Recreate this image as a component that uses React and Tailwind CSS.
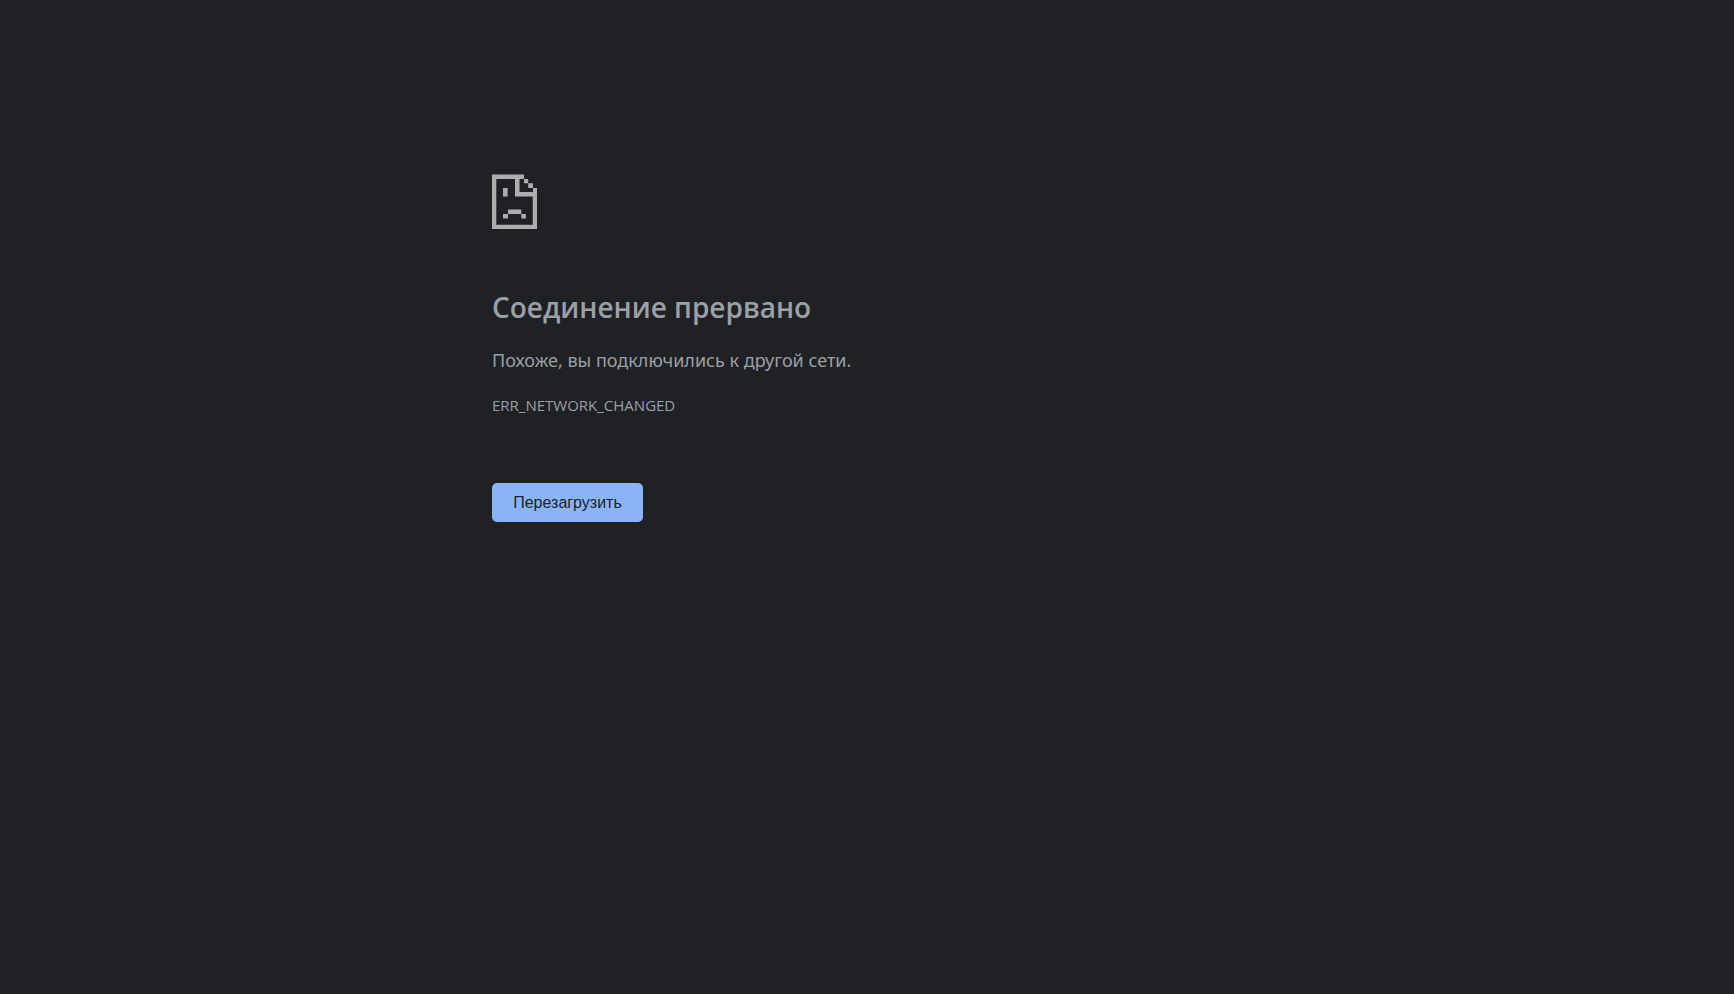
export default function App() {
  return (
    <div className="min-h-screen bg-[#202124] px-6 font-['Open_Sans','Noto_Sans',sans-serif] text-[#9aa0a6]">
      <main className="mx-auto max-w-[750px] pt-[174px]">
        <svg
          aria-hidden="true"
          className="block h-[55px] w-[45px] fill-[#adadad]"
          viewBox="0 0 45 55"
        >
          <path d="M0 .6H32V5H27.5V18H41V14H45V55H0ZM4.3 5V50.7H40.7V22.4H23V5Z" fillRule="evenodd" />
          <path d="M32 5h4.2v4.2h-4.2zM36.2 9.2h4.8v4.8h-4.8zM11 14h4.6v8.4h-4.6zM16 35.6h13.3v4.4h-13.3zM11 40h5v4.4h-5zM29.3 40h4.6v4.4h-4.6z" />
        </svg>
        <h1 className="mt-[58px] text-[28px] leading-10 font-semibold">Соединение прервано</h1>
        <p className="mt-[19px] font-['Noto_Sans','Open_Sans',sans-serif] text-lg leading-7">
          Похоже, вы подключились к другой сети.
        </p>
        <p className="mt-[19px] text-[15px] leading-6">ERR_NETWORK_CHANGED</p>
        <button
          type="button"
          className="mt-[66px] block h-[39px] w-[151px] rounded-[5px] bg-[#8ab4f8] font-['Liberation_Sans',Arial,sans-serif] text-base leading-5 text-[#202124]"
        >
          Перезагрузить
        </button>
      </main>
    </div>
  );
}
